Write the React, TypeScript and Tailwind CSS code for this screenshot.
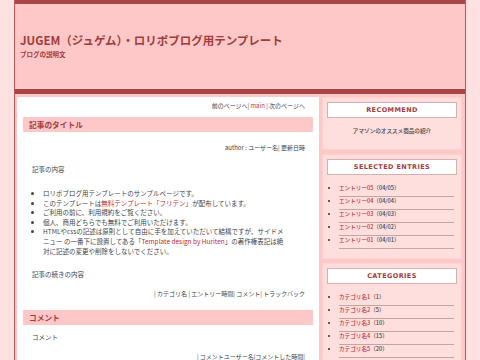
const entries = [
  { name: "エントリー05", date: "（04/05）" },
  { name: "エントリー04", date: "（04/04）" },
  { name: "エントリー03", date: "（04/03）" },
  { name: "エントリー02", date: "（04/02）" },
  { name: "エントリー01", date: "（04/01）" },
];

const categories = [
  { name: "カテゴリ名1", count: "（1）" },
  { name: "カテゴリ名2", count: "（5）" },
  { name: "カテゴリ名3", count: "（10）" },
  { name: "カテゴリ名4", count: "（15）" },
  { name: "カテゴリ名5", count: "（20）" },
];

// Sidebar box title (white plate with thin border)
const SideTitle = ({ label }: { label: string }) => (
  <div className="h-[16px] border border-[#d9b0b0] bg-white text-center font-['DejaVu_Sans',sans-serif] text-[6.5px] font-bold leading-[14px] tracking-[0.4px] text-[#a33c3c]">
    {label}
  </div>
);

const SideList = ({ items }: { items: { name: string; sub: string }[] }) => (
  <ul className="mt-[9px] ml-[12px] mr-[3px] list-disc text-[5.6px] font-medium text-[#444] marker:text-[#333]">
    {items.map((it) => (
      <li key={it.name} className="border-b border-[#c4a4a4] pb-[4px] leading-[8px]">
        <span className="text-[#c03535]">{it.name}</span>
        {it.sub}
      </li>
    ))}
  </ul>
);

export default function App() {
  return (
    <div className="h-[360px] overflow-hidden bg-[#ffe1e1] font-['Noto_Sans_CJK_JP',sans-serif] text-[#444]">
      <div className="ml-[14px] flex h-[360px] w-[452px] flex-col border-x border-[#b85858] bg-[#ffc8c8]">
        <div className="h-[4px] shrink-0 bg-[#a84646]" />

        {/* header */}
        <header className="h-[85px] shrink-0 pl-[5px] pt-[29px]">
          <h1 className="text-[11.5px] font-bold leading-[14px] text-[#a33c3c]">
            JUGEM（ジュゲム）・ロリポブログ用テンプレート
          </h1>
          <p className="mt-[2px] text-[6.5px] font-bold leading-[10px] text-[#a33c3c]">ブログの説明文</p>
        </header>

        <div className="h-[5px] shrink-0 bg-[#a84646]" />

        <div className="flex flex-1 gap-[3px] pl-[2px] pr-[3px] pt-[3px]">
          {/* main column */}
          <main className="w-[302px] bg-white pt-[4px] text-[6.5px]">
            <div className="pr-[14px] text-right text-[6px] leading-[10px]">
              前のページへ| <span className="text-[#c02c2c]">main</span> | 次のページへ
            </div>

            <h2 className="mx-[6px] mt-[6px] h-[15px] bg-[#ffc8c8] pl-[6px] text-[7.7px] font-bold leading-[15px] text-[#a33c3c]">
              記事のタイトル
            </h2>

            <div className="mt-[11px] pr-[14px] text-right text-[6px] leading-[10px]">author : ユーザー名| 更新日時</div>

            <p className="mt-[11px] pl-[15px] leading-[10px]">記事の内容</p>

            <ul className="mt-[15px] list-disc pl-[26px] pr-[12px] leading-[9.6px]">
              <li>ロリポブログ用テンプレートのサンプルページです。</li>
              <li>
                このテンプレートは<span className="text-[#c02c2c]">無料テンプレート「フリテン」</span>が配布しています。
              </li>
              <li>ご利用の前に、利用規約をご覧ください。</li>
              <li>個人、商用どちらでも無料でご利用いただけます。</li>
              <li className="whitespace-nowrap">
                HTMLやcssの記述は原則として自由に手を加えていただいて結構ですが、サイドメ
                <br />
                ニュー の一番下に設置してある「<span className="text-[#c02c2c]">Template design by Huriten</span>」の著作権表記は絶
                <br />
                対に記述の変更や削除をしないでください。
              </li>
            </ul>

            <p className="mt-[13px] pl-[15px] leading-[10px]">記事の続きの内容</p>

            <div className="mt-[10px] pr-[14px] text-right text-[6px] leading-[10px]">
              | カテゴリ名 | エントリー時間| コメント| トラックバック
            </div>

            <h2 className="mx-[6px] mt-[11px] h-[15px] bg-[#ffc8c8] pl-[6px] text-[7.7px] font-bold leading-[15px] text-[#a33c3c]">
              コメント
            </h2>

            <p className="mt-[7px] pl-[15px] leading-[10px]">コメント</p>

            <div className="mt-[10px] pr-[14px] text-right text-[6px] leading-[10px]">
              | コメントユーザー名|コメントした時間|
            </div>
          </main>

          {/* sidebar */}
          <aside className="flex w-[140px] flex-col gap-[4px]">
            <section className="border border-[#ffd2d2] bg-[#ffdede] px-[4px] pb-[13px] pt-[4px]">
              <SideTitle label="RECOMMEND" />
              <p className="mt-[8px] text-center text-[5.6px] font-medium leading-[10px] text-[#444]">
                アマゾンのオススメ商品の紹介
              </p>
            </section>

            <section className="border border-[#ffd2d2] bg-[#ffdede] px-[4px] pb-[9px] pt-[4px]">
              <SideTitle label="SELECTED ENTRIES" />
              <SideList items={entries.map((e) => ({ name: e.name, sub: e.date }))} />
            </section>

            <section className="border border-[#ffd2d2] bg-[#ffdede] px-[4px] pb-[9px] pt-[4px]">
              <SideTitle label="CATEGORIES" />
              <SideList items={categories.map((c) => ({ name: c.name, sub: c.count }))} />
            </section>
          </aside>
        </div>
      </div>
    </div>
  );
}
